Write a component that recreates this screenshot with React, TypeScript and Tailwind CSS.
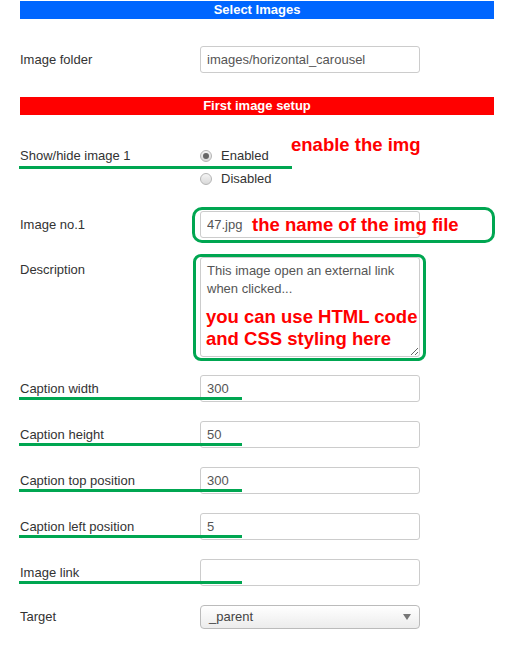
import React from "react";

const Underline = ({ w }: { w: string }) => (
  <div className={`absolute left-[-1px] bottom-[2px] h-[3px] bg-[#00a651] ${w}`} />
);

const FieldRow = ({ label, value, mark }: { label: string; value: string; mark?: boolean }) => (
  <div className="relative mt-[19px] flex h-[27px] items-center">
    <div className="w-[180px] text-[13px] text-[#333]">{label}</div>
    <input
      readOnly
      value={value}
      className="h-[27px] w-[220px] rounded-[3px] border border-[#ccc] bg-white px-[6px] text-[13px] text-[#555] outline-none"
    />
    {mark ? <div className="absolute left-[-1px] bottom-[2px] h-[3px] w-[223px] bg-[#00a651]" /> : null}
  </div>
);

const Radio = ({ checked, label }: { checked?: boolean; label: string }) => (
  <div className="flex h-[23px] items-center">
    <span className="flex h-[12px] w-[12px] items-center justify-center rounded-full border border-[#b5b5b5] bg-gradient-to-b from-[#f4f4f4] to-[#d9d9d9]">
      {checked ? <span className="h-[6px] w-[6px] rounded-full bg-[#666]" /> : null}
    </span>
    <span className="ml-[9px] text-[13px] text-[#333]">{label}</span>
  </div>
);

const App = () => {
  const red = "font-bold text-[18.5px] leading-[22px] text-[#ff0000]";
  return (
    <div className="min-h-[646px] bg-white pt-[1px] pl-[20px] font-['Liberation_Sans',Arial,sans-serif]">
      <div className="w-[474px]">
        <div className="h-[18px] bg-[#0066ff] text-center text-[13px] font-bold leading-[18px] text-white">
          Select Images
        </div>

        <div className="mt-[27px] flex h-[27px] items-center">
          <div className="w-[180px] text-[13px] text-[#333]">Image folder</div>
          <input
            readOnly
            value="images/horizontal_carousel"
            className="h-[27px] w-[220px] rounded-[3px] border border-[#ccc] bg-white px-[6px] text-[13px] text-[#555] outline-none"
          />
        </div>

        <div className="mt-[24px] h-[18px] bg-[#ff0000] text-center text-[13px] font-bold leading-[18px] text-white">
          First image setup
        </div>

        {/* show / hide */}
        <div className="relative mt-[29px] flex">
          <div className="flex h-[23px] w-[180px] items-center text-[13px] text-[#333]">Show/hide image 1</div>
          <div className="flex flex-col">
            <Radio checked label="Enabled" />
            <Radio label="Disabled" />
          </div>
          <div className="absolute left-[-1px] top-[22px] h-[3px] w-[273px] bg-[#00a651]" />
          <div className={`absolute left-[271px] top-[-10px] ${red}`}>enable the img</div>
        </div>

        {/* image no.1 */}
        <div className="relative mt-[21px] flex h-[27px] items-center">
          <div className="w-[180px] text-[13px] text-[#333]">Image no.1</div>
          <input
            readOnly
            value="47.jpg"
            className="h-[27px] w-[220px] rounded-[3px] border border-[#ccc] bg-white px-[6px] text-[13px] text-[#555] outline-none"
          />
          <div className="absolute left-[172px] top-[-4px] h-[36px] w-[303px] rounded-[10px] border-[3px] border-[#00a651]" />
          <div className={`absolute left-[232px] top-[3px] ${red}`}>the name of the img file</div>
        </div>

        {/* description */}
        <div className="relative mt-[19px] flex">
          <div className="w-[180px] pt-[4px] text-[13px] leading-[18px] text-[#333]">Description</div>
          <textarea
            readOnly
            value={"This image open an external link when clicked..."}
            className="h-[100px] w-[220px] resize-y rounded-[3px] border border-[#ccc] bg-white px-[6px] pt-[4px] text-[13px] leading-[18px] text-[#555] outline-none"
          />
          <div className="absolute left-[173px] top-[-3px] h-[107px] w-[233px] rounded-[8px] border-[3px] border-[#00a651]" />
          <div className={`absolute left-[186px] top-[49px] ${red}`}>
            you can use HTML code
            <br />
            and CSS styling here
          </div>
        </div>

        <div className="mt-[-1px]" />
        <FieldRow label="Caption width" value="300" mark />
        <FieldRow label="Caption height" value="50" mark />
        <FieldRow label="Caption top position" value="300" mark />
        <FieldRow label="Caption left position" value="5" mark />
        <FieldRow label="Image link" value="" mark />

        {/* target */}
        <div className="mt-[19px] flex h-[24px] items-center">
          <div className="w-[180px] text-[13px] text-[#333]">Target</div>
          <div className="flex h-[24px] w-[220px] items-center justify-between rounded-[4px] border border-[#bbb] bg-gradient-to-b from-white to-[#ececec] pl-[8px] pr-[8px] text-[13px] text-[#444]">
            <span>_parent</span>
            <svg width="8" height="6" viewBox="0 0 8 6">
              <path d="M0 0 L8 0 L4 6 Z" fill="#777" />
            </svg>
          </div>
        </div>
      </div>
    </div>
  );
};

export default App;
